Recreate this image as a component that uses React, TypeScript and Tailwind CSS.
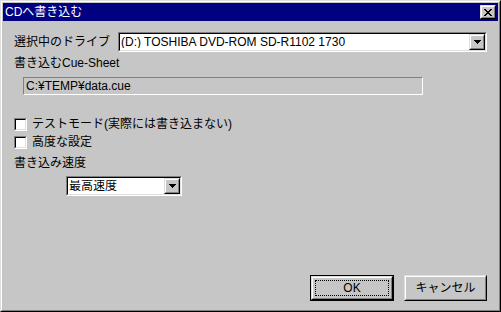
import React from 'react';

const font = { fontFamily: '"Liberation Sans", "Noto Sans CJK JP", sans-serif' };

const Raised: React.FC<{ className?: string; children?: React.ReactNode }> = ({ className = '', children }) => (
  <div className={`border border-t-[#dfdfdf] border-l-[#dfdfdf] border-r-black border-b-black ${className}`}>
    <div className="w-full h-full border border-t-white border-l-white border-r-[#808080] border-b-[#808080] bg-[#c6c6c6] flex items-center justify-center">
      {children}
    </div>
  </div>
);

const Sunken: React.FC<{ className?: string; inner?: string; children?: React.ReactNode }> = ({ className = '', inner = 'bg-white', children }) => (
  <div className={`border border-t-[#808080] border-l-[#808080] border-r-white border-b-white ${className}`}>
    <div className={`w-full h-full border border-t-black border-l-black border-r-[#dfdfdf] border-b-[#dfdfdf] flex items-center ${inner}`}>
      {children}
    </div>
  </div>
);

const Arrow = () => (
  <svg width="7" height="4" viewBox="0 0 7 4">
    <path d="M0 0h7L3.5 4z" fill="black" shapeRendering="crispEdges" />
  </svg>
);

const Combo: React.FC<{ value: string; className?: string }> = ({ value, className = '' }) => (
  <Sunken className={className}>
    <span className="flex-1 pl-[1px] text-[12px] leading-none text-black whitespace-nowrap overflow-hidden">{value}</span>
    <Raised className="w-[16px] h-[16px] shrink-0">
      <Arrow />
    </Raised>
  </Sunken>
);

const Check: React.FC<{ label: string }> = ({ label }) => (
  <div className="flex items-center h-[18px]">
    <Sunken className="w-[13px] h-[13px]" />
    <span className="ml-[5px] text-[12px] leading-none">{label}</span>
  </div>
);

export default function App() {
  return (
    <div className="w-[501px] h-[312px] bg-[#c6c6c6] text-black" style={font}>
      <div className="w-full h-full border border-t-[#dfdfdf] border-l-[#dfdfdf] border-r-black border-b-black">
        <div className="w-full h-full border border-t-white border-l-white border-r-[#808080] border-b-[#808080] p-[1px] flex flex-col">
          <div className="h-[18px] bg-[#000080] flex items-center pl-[2px] pr-[2px]">
            <span className="text-white text-[12px] leading-none flex-1">CDへ書き込む</span>
            <Raised className="w-[16px] h-[14px]">
              <svg width="8" height="7" viewBox="0 0 8 7">
                <path d="M0 0h2l2 2.5L6 0h2L5 3.5 8 7H6L4 4.5 2 7H0l3-3.5z" fill="black" shapeRendering="crispEdges" />
              </svg>
            </Raised>
          </div>

          <div className="flex items-center mt-[11px] pl-[11px]">
            <span className="w-[104px] text-[12px] leading-none">選択中のドライブ</span>
            <Combo value="(D:) TOSHIBA DVD-ROM SD-R1102 1730" className="w-[369px] h-[20px]" />
          </div>

          <div className="mt-[4px] pl-[11px] text-[12px] leading-[14px]">書き込むCue-Sheet</div>
          <div className="mt-[7px] ml-[20px] w-[400px] h-[18px] border border-t-[#808080] border-l-[#808080] border-r-white border-b-white flex items-center pl-[2px] text-[12px] leading-none">
            C:¥TEMP¥data.cue
          </div>

          <div className="mt-[20px] pl-[11px] flex flex-col">
            <Check label="テストモード(実際には書き込まない)" />
            <Check label="高度な設定" />
          </div>

          <div className="mt-[5px] pl-[11px] text-[12px] leading-[14px]">書き込み速度</div>
          <Combo value="最高速度" className="mt-[6px] ml-[63px] w-[116px] h-[20px]" />

          <div className="mt-auto mb-[8px] flex justify-end gap-[10px] pr-[11px]">
            <div className="w-[84px] h-[26px] border border-black">
              <Raised className="w-full h-full">
                <div className="w-[74px] h-[16px] border border-dotted border-black flex items-center justify-center text-[12px] leading-none">OK</div>
              </Raised>
            </div>
            <Raised className="w-[83px] h-[26px]">
              <span className="text-[12px] leading-none">キャンセル</span>
            </Raised>
          </div>
        </div>
      </div>
    </div>
  );
}
